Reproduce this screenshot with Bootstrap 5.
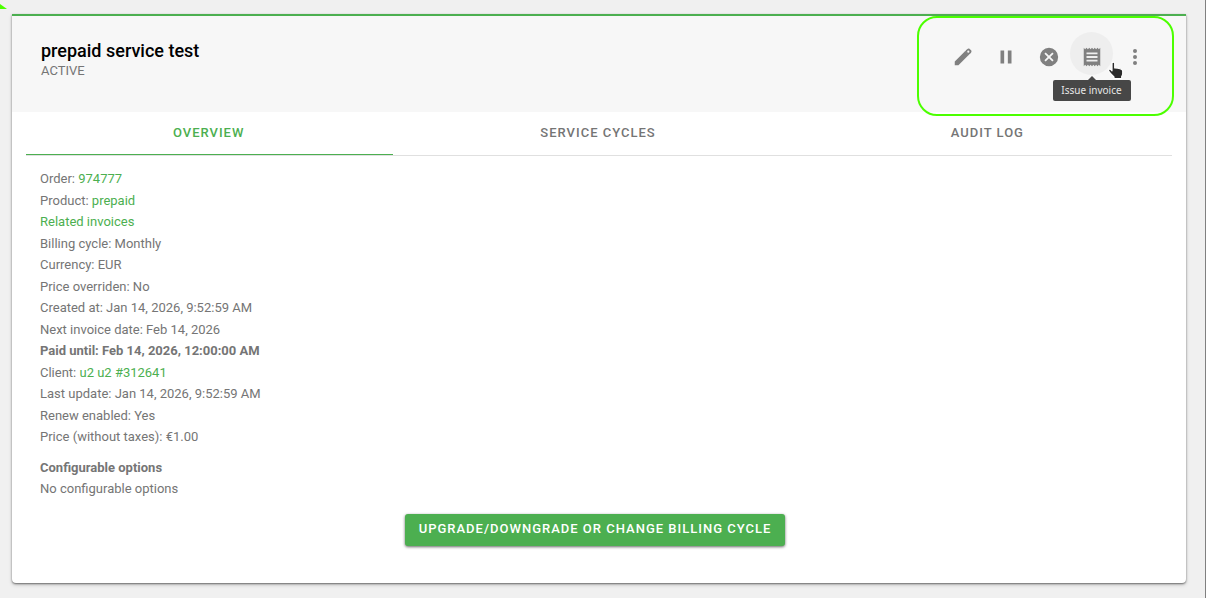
<!DOCTYPE html>
<html lang="en">
<head>
<meta charset="utf-8">
<meta name="viewport" content="width=device-width, initial-scale=1">
<title>prepaid service test</title>
<link href="https://cdn.jsdelivr.net/npm/bootstrap@5.3.0/dist/css/bootstrap.min.css" rel="stylesheet">
<style>
  :root { --brand: #4caf50; --ink: #757575; --marker: #4cff00; }
  body { background: #f0f0f0; color: var(--ink); font: 13px/21px Roboto, "Liberation Sans", sans-serif; border-right: 1px solid #808080; min-height: 100vh; }
  a { color: var(--brand); text-decoration: none; }
  .page { padding: 14px 19px 15px 12px; }
  .corner-mark { left: 0; top: 3px; }
  .service-card { border: 0; border-top: 2px solid var(--brand); border-radius: 0 0 4px 4px; color: inherit; box-shadow: 0 1px 2px rgba(0,0,0,.5), 0 2px 4px rgba(0,0,0,.14); }
  .service-head { background: #f7f7f7; height: 96px; padding: 16px 30px 16px 29px; }
  .service-head h1 { font-size: 18px; line-height: 24px; font-weight: 500; color: #000; margin: 7px 0 0; }
  .service-head p { font-size: 13px; line-height: 16px; margin: 0; }
  .marker { top: 0; right: 12px; width: 257px; height: 100px; border: 2px solid var(--marker); border-radius: 20px; pointer-events: none; }
  .tool { width: 43px; height: 43px; border: 0; border-radius: 50%; background: none; color: #808080; padding: 6px 0 0; display: flex; align-items: center; justify-content: center; }
  .tool:hover, .tool.hovered { background: #eee; }
  .tip { top: 48px; left: 50%; transform: translateX(-50%); background: #474747; color: #e6e6e6; font: 10px/21px "Noto Sans", sans-serif; width: 78px; border-radius: 2px; text-align: center; white-space: nowrap; }
  .tip::before { content: ""; position: absolute; bottom: 100%; left: 50%; margin-left: -4px; border: 4px solid transparent; border-top: 0; border-bottom-color: #474747; }
  .pointer { left: 37px; top: 29px; z-index: 3; }
  .tab-row { margin: 0 14px; gap: 22px; border-bottom: 1px solid #e0e0e0; }
  .tab-row .nav-link { width: 100%; height: 43px; padding: 0 2px 0 0; font-size: 13px; line-height: 42px; font-weight: 500; letter-spacing: 1px; color: var(--ink); background: none; border: 0; border-bottom: 1px solid transparent; border-radius: 0; }
  .tab-row .nav-link.active { color: var(--brand); border-bottom-color: var(--brand); }
  .details { padding: 12px 28px 37px; }
  .facts { display: grid; grid-auto-rows: 21px; align-content: space-between; min-height: 279px; margin: 0 0 10px; }
  .options h2 { font-size: 13px; line-height: 21px; font-weight: 700; margin: 0; }
  .btn-change { --bs-btn-color: #fff; --bs-btn-bg: var(--brand); --bs-btn-hover-color: #fff; --bs-btn-hover-bg: #43a047; border: 0; border-radius: 3px; padding: 0 14px 2px; font-size: 13px; line-height: 30px; font-weight: 500; letter-spacing: 1px; margin-top: 15px; margin-right: 8px; box-shadow: 0 1px 3px rgba(0,0,0,.6); }
</style>
</head>
<body>
<svg class="corner-mark position-absolute" width="7" height="6" viewBox="0 0 7 6" aria-hidden="true"><path d="M0 1 7 6H0Z" fill="#4cff00"/></svg>
<main class="page container-fluid">
  <section class="card service-card">
    <header class="service-head d-flex justify-content-between position-relative">
      <div>
        <h1>prepaid service test</h1>
        <p>ACTIVE</p>
      </div>
      <div class="d-flex">
        <button class="tool" type="button" aria-label="Edit"><svg width="22" height="22" viewBox="0 0 24 24" fill="currentColor"><path d="M3 17v4h4L18.200 9.800l-4-4zM15.200 4.800l4 4 1.300-1.300c1-1 1-2 .3-2.800l-1.500-1.500c-.8-.7-1.800-.7-2.800.3z"/><path d="M14 6l2-2 4 4-2 2z"/><circle cx="17.800" cy="6.200" r="1.200" fill="#f7f7f7"/></svg></button>
        <button class="tool" type="button" aria-label="Pause"><svg width="22" height="22" viewBox="0 0 24 24" fill="currentColor"><path d="M6 5h4v14H6zM14 5h4v14h-4z"/></svg></button>
        <button class="tool" type="button" aria-label="Cancel"><svg width="22" height="22" viewBox="0 0 24 24" fill="currentColor"><path d="M12 2a10 10 0 1 0 0 20 10 10 0 0 0 0-20zm5 13.600L15.600 17 12 13.400 8.400 17 7 15.600 10.600 12 7 8.400 8.400 7 12 10.600 15.600 7 17 8.400 13.400 12z"/></svg></button>
        <div class="position-relative">
          <button class="tool hovered" type="button" aria-label="Issue invoice" aria-describedby="tip"><svg width="22" height="22" viewBox="0 0 24 24" fill="currentColor"><path d="M18 17H6v-2h12v2zm0-4H6v-2h12v2zm0-4H6V7h12v2zM3 22l1.500-1.500L6 22l1.500-1.500L9 22l1.500-1.500L12 22l1.500-1.500L15 22l1.500-1.500L18 22l1.500-1.500L21 22V2l-1.500 1.500L18 2l-1.500 1.500L15 2l-1.500 1.500L12 2l-1.500 1.500L9 2 7.500 3.500 6 2 4.500 3.500 3 2v20z"/></svg></button>
          <div class="tip position-absolute" id="tip" role="tooltip">Issue invoice</div>
          <svg class="pointer position-absolute" width="20" height="20" viewBox="0 0 20 20" aria-hidden="true"><path d="M5 2.500c0-1.800 2.700-1.800 2.700 0V7c3.500 0 8 .5 8 3v3c0 1-.7 1.500-1 2.500V17.500H7v-1.500C5 14 2.300 11.500 1.500 9.500c-.3-1.600 1.500-2 3.500.300z" fill="#2b2b2b" stroke="#fff" stroke-width="1.200" stroke-linejoin="round"/></svg>
        </div>
        <button class="tool" type="button" aria-label="More"><svg width="22" height="22" viewBox="0 0 24 24" fill="currentColor"><circle cx="12" cy="5.500" r="2.200"/><circle cx="12" cy="12" r="2.200"/><circle cx="12" cy="18.500" r="2.200"/></svg></button>
      </div>
      <div class="marker position-absolute"></div>
    </header>
    <ul class="nav nav-justified tab-row" role="tablist">
      <li class="nav-item" role="presentation"><button class="nav-link active" type="button" role="tab" aria-selected="true">OVERVIEW</button></li>
      <li class="nav-item" role="presentation"><button class="nav-link" type="button" role="tab" aria-selected="false">SERVICE CYCLES</button></li>
      <li class="nav-item" role="presentation"><button class="nav-link" type="button" role="tab" aria-selected="false">AUDIT LOG</button></li>
    </ul>
    <div class="details">
      <ul class="facts list-unstyled">
        <li>Order: <a href="#">974777</a></li>
        <li>Product: <a href="#">prepaid</a></li>
        <li><a href="#">Related invoices</a></li>
        <li>Billing cycle: Monthly</li>
        <li>Currency: EUR</li>
        <li>Price overriden: No</li>
        <li>Created at: Jan 14, 2026, 9:52:59 AM</li>
        <li>Next invoice date: Feb 14, 2026</li>
        <li class="fw-bold">Paid until: Feb 14, 2026, 12:00:00 AM</li>
        <li>Client: <a href="#">u2 u2 #312641</a></li>
        <li>Last update: Jan 14, 2026, 9:52:59 AM</li>
        <li>Renew enabled: Yes</li>
        <li>Price (without taxes): €1.00</li>
      </ul>
      <div class="options">
        <h2>Configurable options</h2>
        <div>No configurable options</div>
      </div>
      <div class="text-center"><button class="btn btn-change" type="button">UPGRADE/DOWNGRADE OR CHANGE BILLING CYCLE</button></div>
    </div>
  </section>
</main>
<script src="https://cdn.jsdelivr.net/npm/bootstrap@5.3.0/dist/js/bootstrap.bundle.min.js"></script>
</body>
</html>
